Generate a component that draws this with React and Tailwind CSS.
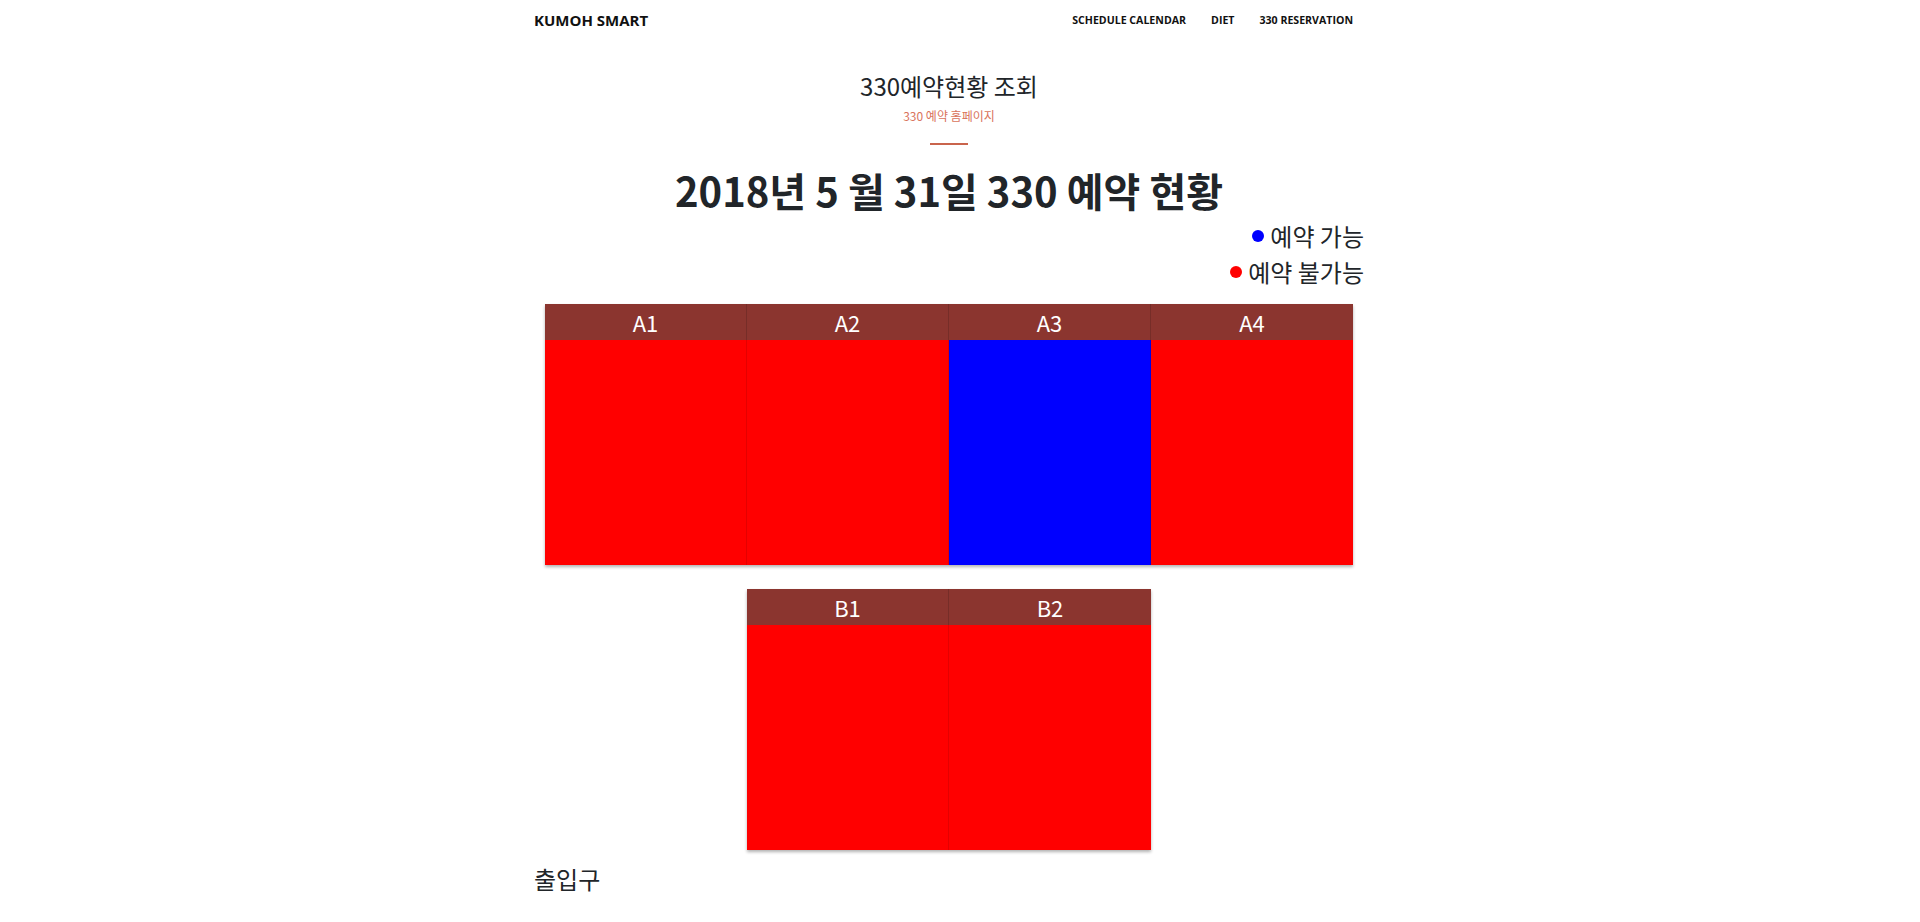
const seatsA = [
  { name: "A1", free: false },
  { name: "A2", free: false },
  { name: "A3", free: true },
  { name: "A4", free: false },
];

const seatsB = [
  { name: "B1", free: false },
  { name: "B2", free: false },
];

const kr = "font-['Noto_Sans_CJK_KR','Noto_Sans',sans-serif]";

// one column of the seat map: brown header + coloured body (border drawn over own bg so it darkens)
const Seat = ({ seat, last }) => (
  <div className="flex flex-col">
    <div
      className={`h-[36px] bg-[#8b352f] flex items-center justify-center text-white text-[22px] leading-none ${
        last ? "" : "border-r border-black/15"
      }`}
    >
      {seat.name}
    </div>
    <div
      className={`h-[225px] ${seat.free ? "bg-[#0000ff]" : "bg-[#ff0000]"} ${last ? "" : "border-r border-black/10"}`}
    />
  </div>
);

const App = () => {
  return (
    <div className={`min-h-screen bg-white pr-[22px] text-[#212529] ${kr}`}>
      <div className="mx-auto w-[830px]">
        {/* NAVBAR */}
        <nav className="h-10 flex items-center justify-between pr-[11px] font-['Open_Sans',sans-serif] font-bold text-[#111]">
          <span className="text-[15px] leading-none">KUMOH SMART</span>
          <div className="flex items-center gap-[25px] text-[10.6px] leading-none">
            <span>SCHEDULE CALENDAR</span>
            <span>DIET</span>
            <span>330 RESERVATION</span>
          </div>
        </nav>

        {/* PAGE TITLE */}
        <div className="flex flex-col items-center">
          <h2 className="mt-[31px] text-[24px] leading-[30px] font-normal">330예약현황 조회</h2>
          <p className="mt-[6px] text-[12px] leading-[18px] text-[#d9735c]">330 예약 홈페이지</p>
          <div className="mt-[18px] w-[38px] h-[2px] bg-[#c9644c]" />
          <h1 className="mt-[21px] text-[40px] leading-[48px] font-bold">2018년 5 월 31일 330 예약 현황</h1>
        </div>

        {/* LEGEND */}
        <div className="mt-[4px] flex flex-col items-end text-[24px] leading-[36px]">
          <div className="flex items-center">
            <span className="w-3 h-3 rounded-full bg-[#0000ff] mr-[6px]" />
            예약 가능
          </div>
          <div className="flex items-center">
            <span className="w-3 h-3 rounded-full bg-[#ff0000] mr-[6px]" />
            예약 불가능
          </div>
        </div>

        {/* SEAT MAP */}
        <div className="mx-[11px] mt-[14px]">
          <div className="grid grid-cols-4 shadow-[0_2px_3px_rgba(0,0,0,0.3)]">
            {seatsA.map((s, i) => (
              <Seat key={s.name} seat={s} last={i === seatsA.length - 1} />
            ))}
          </div>
          <div className="mt-[24px] mx-auto w-[404px] grid grid-cols-2 shadow-[0_2px_3px_rgba(0,0,0,0.3)]">
            {seatsB.map((s, i) => (
              <Seat key={s.name} seat={s} last={i === seatsB.length - 1} />
            ))}
          </div>
        </div>

        <div className="mt-[11px] text-[24px] leading-[36px]">출입구</div>
      </div>
    </div>
  );
};

export default App;
